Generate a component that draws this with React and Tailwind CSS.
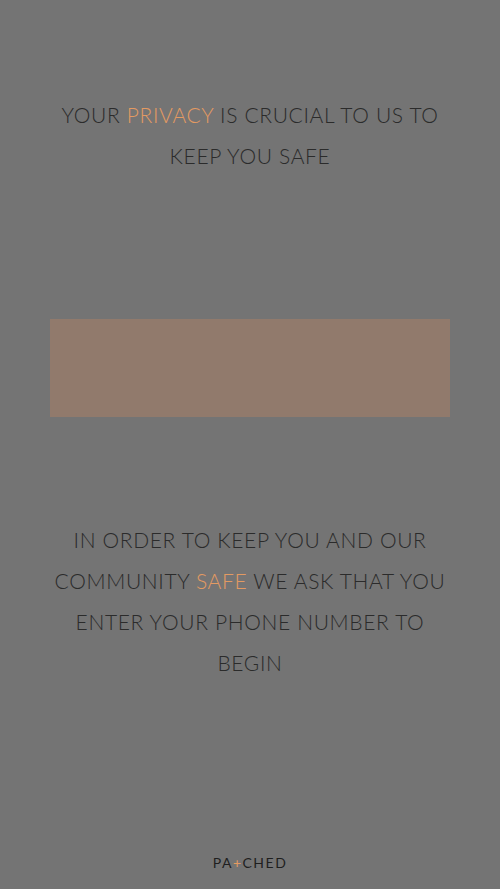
export default function App() {
  return (
    <div className="w-[500px] h-[889px] bg-[#747474] flex flex-col items-center text-[#2b2b2b]" style={{ fontFamily: 'Lato, "Open Sans", sans-serif' }}>
      <p className="mt-[94px] w-[400px] text-center text-[21px] leading-[41px] font-light tracking-[0.65px]">
        YOUR <span className="text-[#e39a62]">PRIVACY</span> IS CRUCIAL TO US TO KEEP YOU SAFE
      </p>
      <div className="mt-[143px] w-[400px] h-[98px] bg-[#917a6c]" />
      <p className="mt-[102px] w-[400px] text-center text-[21px] leading-[41px] font-light tracking-[0.65px]">
        IN ORDER TO KEEP YOU AND OUR COMMUNITY <span className="text-[#e39a62]">SAFE</span> WE ASK THAT YOU ENTER YOUR PHONE NUMBER TO BEGIN
      </p>
      <div className="mt-auto mb-[16px] text-[14px] tracking-[1.5px] text-[#1f1f1f]">
        PA<span className="text-[#e39a62]">+</span>CHED
      </div>
    </div>
  );
}
